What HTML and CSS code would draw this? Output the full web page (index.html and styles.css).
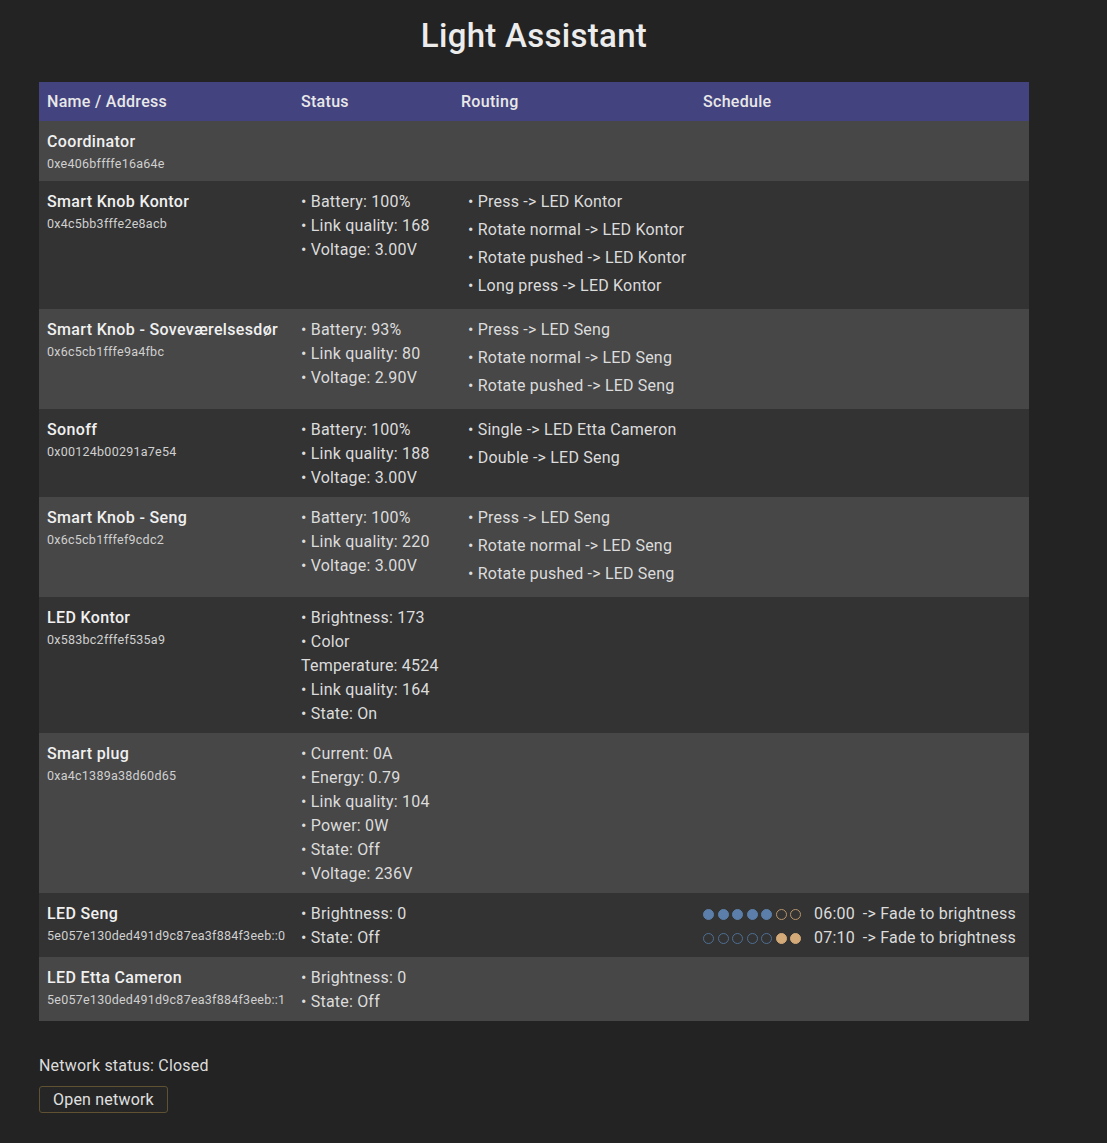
FILE: index.html
```html
<!DOCTYPE html>
<html lang="en">
<head>
<meta charset="utf-8">
<title>Light Assistant</title>
<link rel="stylesheet" href="styles.css">
</head>
<body>
<div class="page">
  <h1 class="title">Light Assistant</h1>
  <table class="devices">
    <thead>
      <tr><th class="c-name">Name / Address</th><th class="c-status">Status</th><th class="c-routing">Routing</th><th class="c-schedule">Schedule</th></tr>
    </thead>
    <tbody>
      <tr>
        <td><div class="name">Coordinator</div><div class="addr">0xe406bffffe16a64e</div></td>
        <td></td><td></td><td></td>
      </tr>
      <tr>
        <td><div class="name">Smart Knob Kontor</div><div class="addr">0x4c5bb3fffe2e8acb</div></td>
        <td><div class="st">• Battery: 100%</div><div class="st">• Link quality: 168</div><div class="st">• Voltage: 3.00V</div></td>
        <td><div class="rt">• Press -&gt; LED Kontor</div><div class="rt">• Rotate normal -&gt; LED Kontor</div><div class="rt">• Rotate pushed -&gt; LED Kontor</div><div class="rt">• Long press -&gt; LED Kontor</div></td>
        <td></td>
      </tr>
      <tr>
        <td><div class="name">Smart Knob - Soveværelsesdør</div><div class="addr">0x6c5cb1fffe9a4fbc</div></td>
        <td><div class="st">• Battery: 93%</div><div class="st">• Link quality: 80</div><div class="st">• Voltage: 2.90V</div></td>
        <td><div class="rt">• Press -&gt; LED Seng</div><div class="rt">• Rotate normal -&gt; LED Seng</div><div class="rt">• Rotate pushed -&gt; LED Seng</div></td>
        <td></td>
      </tr>
      <tr>
        <td><div class="name">Sonoff</div><div class="addr">0x00124b00291a7e54</div></td>
        <td><div class="st">• Battery: 100%</div><div class="st">• Link quality: 188</div><div class="st">• Voltage: 3.00V</div></td>
        <td><div class="rt">• Single -&gt; LED Etta Cameron</div><div class="rt">• Double -&gt; LED Seng</div></td>
        <td></td>
      </tr>
      <tr>
        <td><div class="name">Smart Knob - Seng</div><div class="addr">0x6c5cb1fffef9cdc2</div></td>
        <td><div class="st">• Battery: 100%</div><div class="st">• Link quality: 220</div><div class="st">• Voltage: 3.00V</div></td>
        <td><div class="rt">• Press -&gt; LED Seng</div><div class="rt">• Rotate normal -&gt; LED Seng</div><div class="rt">• Rotate pushed -&gt; LED Seng</div></td>
        <td></td>
      </tr>
      <tr>
        <td><div class="name">LED Kontor</div><div class="addr">0x583bc2fffef535a9</div></td>
        <td><div class="st">• Brightness: 173</div><div class="st">• Color Temperature: 4524</div><div class="st">• Link quality: 164</div><div class="st">• State: On</div></td>
        <td></td><td></td>
      </tr>
      <tr>
        <td><div class="name">Smart plug</div><div class="addr">0xa4c1389a38d60d65</div></td>
        <td><div class="st">• Current: 0A</div><div class="st">• Energy: 0.79</div><div class="st">• Link quality: 104</div><div class="st">• Power: 0W</div><div class="st">• State: Off</div><div class="st">• Voltage: 236V</div></td>
        <td></td><td></td>
      </tr>
      <tr>
        <td><div class="name">LED Seng</div><div class="addr">5e057e130ded491d9c87ea3f884f3eeb::0</div></td>
        <td><div class="st">• Brightness: 0</div><div class="st">• State: Off</div></td>
        <td></td>
        <td>
          <div class="sched">
            <span class="days"><i class="dot wk on"></i><i class="dot wk on"></i><i class="dot wk on"></i><i class="dot wk on"></i><i class="dot wk on"></i><i class="dot we"></i><i class="dot we"></i></span>
            <span class="time">06:00</span><span class="act">-&gt; Fade to brightness</span>
          </div>
          <div class="sched">
            <span class="days"><i class="dot wk"></i><i class="dot wk"></i><i class="dot wk"></i><i class="dot wk"></i><i class="dot wk"></i><i class="dot we on"></i><i class="dot we on"></i></span>
            <span class="time">07:10</span><span class="act">-&gt; Fade to brightness</span>
          </div>
        </td>
      </tr>
      <tr>
        <td><div class="name">LED Etta Cameron</div><div class="addr">5e057e130ded491d9c87ea3f884f3eeb::1</div></td>
        <td><div class="st">• Brightness: 0</div><div class="st">• State: Off</div></td>
        <td></td><td></td>
      </tr>
    </tbody>
  </table>
  <div class="network">
    <div class="net-status">Network status: Closed</div>
    <button class="btn">Open network</button>
  </div>
</div>
</body>
</html>
```
FILE: styles.css
```css
html, body {
  margin: 0;
  padding: 0;
  background: #232323;
}
body {
  font-family: Roboto, "Liberation Sans", sans-serif;
  color: #dcdcdc;
  font-size: 16px;
  letter-spacing: 0.2px;
}
.page {
  width: 990px;
  margin-left: 39px;
  padding-top: 16px;
}
.title {
  margin: 0 0 26px 0;
  text-align: center;
  font-size: 33px;
  line-height: 40px;
  font-weight: 500;
  letter-spacing: 0.3px;
  color: #ececec;
}
.devices {
  width: 990px;
  border-collapse: collapse;
  table-layout: fixed;
}
.devices th {
  background: #434380;
  color: #e8e8e8;
  text-align: left;
  font-weight: 500;
  font-size: 16px;
  letter-spacing: 0.3px;
  height: 39px;
  padding: 0 8px;
  box-sizing: border-box;
}
.c-name { width: 254px; }
.c-status { width: 160px; }
.c-routing { width: 242px; }
.c-schedule { width: 334px; }
.devices td {
  vertical-align: top;
  padding: 9px 8px 7px 8px;
  line-height: 24px;
}
.devices tbody tr:nth-child(odd) { background: #474747; }
.devices tbody tr:nth-child(even) { background: #333333; }
.name {
  font-weight: 500;
  color: #f0f0f0;
  line-height: 24px;
  letter-spacing: 0.35px;
  white-space: nowrap;
}
.addr {
  font-size: 12.5px;
  line-height: 20px;
  color: #d0d0d0;
  letter-spacing: 0.25px;
  white-space: nowrap;
}
.st { line-height: 24px; }
.rt { line-height: 24px; margin-bottom: 4px; padding-left: 7px; white-space: nowrap; }
.sched {
  display: flex;
  align-items: center;
  height: 24px;
  white-space: nowrap;
}
.days {
  display: flex;
  gap: 3.5px;
  margin-right: 13px;
}
.dot {
  display: block;
  width: 11px;
  height: 11px;
  border-radius: 50%;
  box-sizing: border-box;
}
.dot.wk { border: 1.5px solid #4f6f95; }
.dot.wk.on { background: #5b7faa; border-color: #5b7faa; }
.dot.we { border: 1.5px solid #b8956a; }
.dot.we.on { background: #d4aa78; border-color: #d4aa78; }
.time { margin-right: 8px; }
.network {
  padding-top: 33px;
}
.net-status {
  line-height: 24px;
}
.btn {
  display: block;
  margin-top: 8px;
  font-family: inherit;
  font-size: 16px;
  letter-spacing: 0.2px;
  color: #e0e0e0;
  background: #262626;
  border: 1px solid #5e5232;
  border-radius: 3px;
  height: 27px;
  padding: 0 13px;
}
```
